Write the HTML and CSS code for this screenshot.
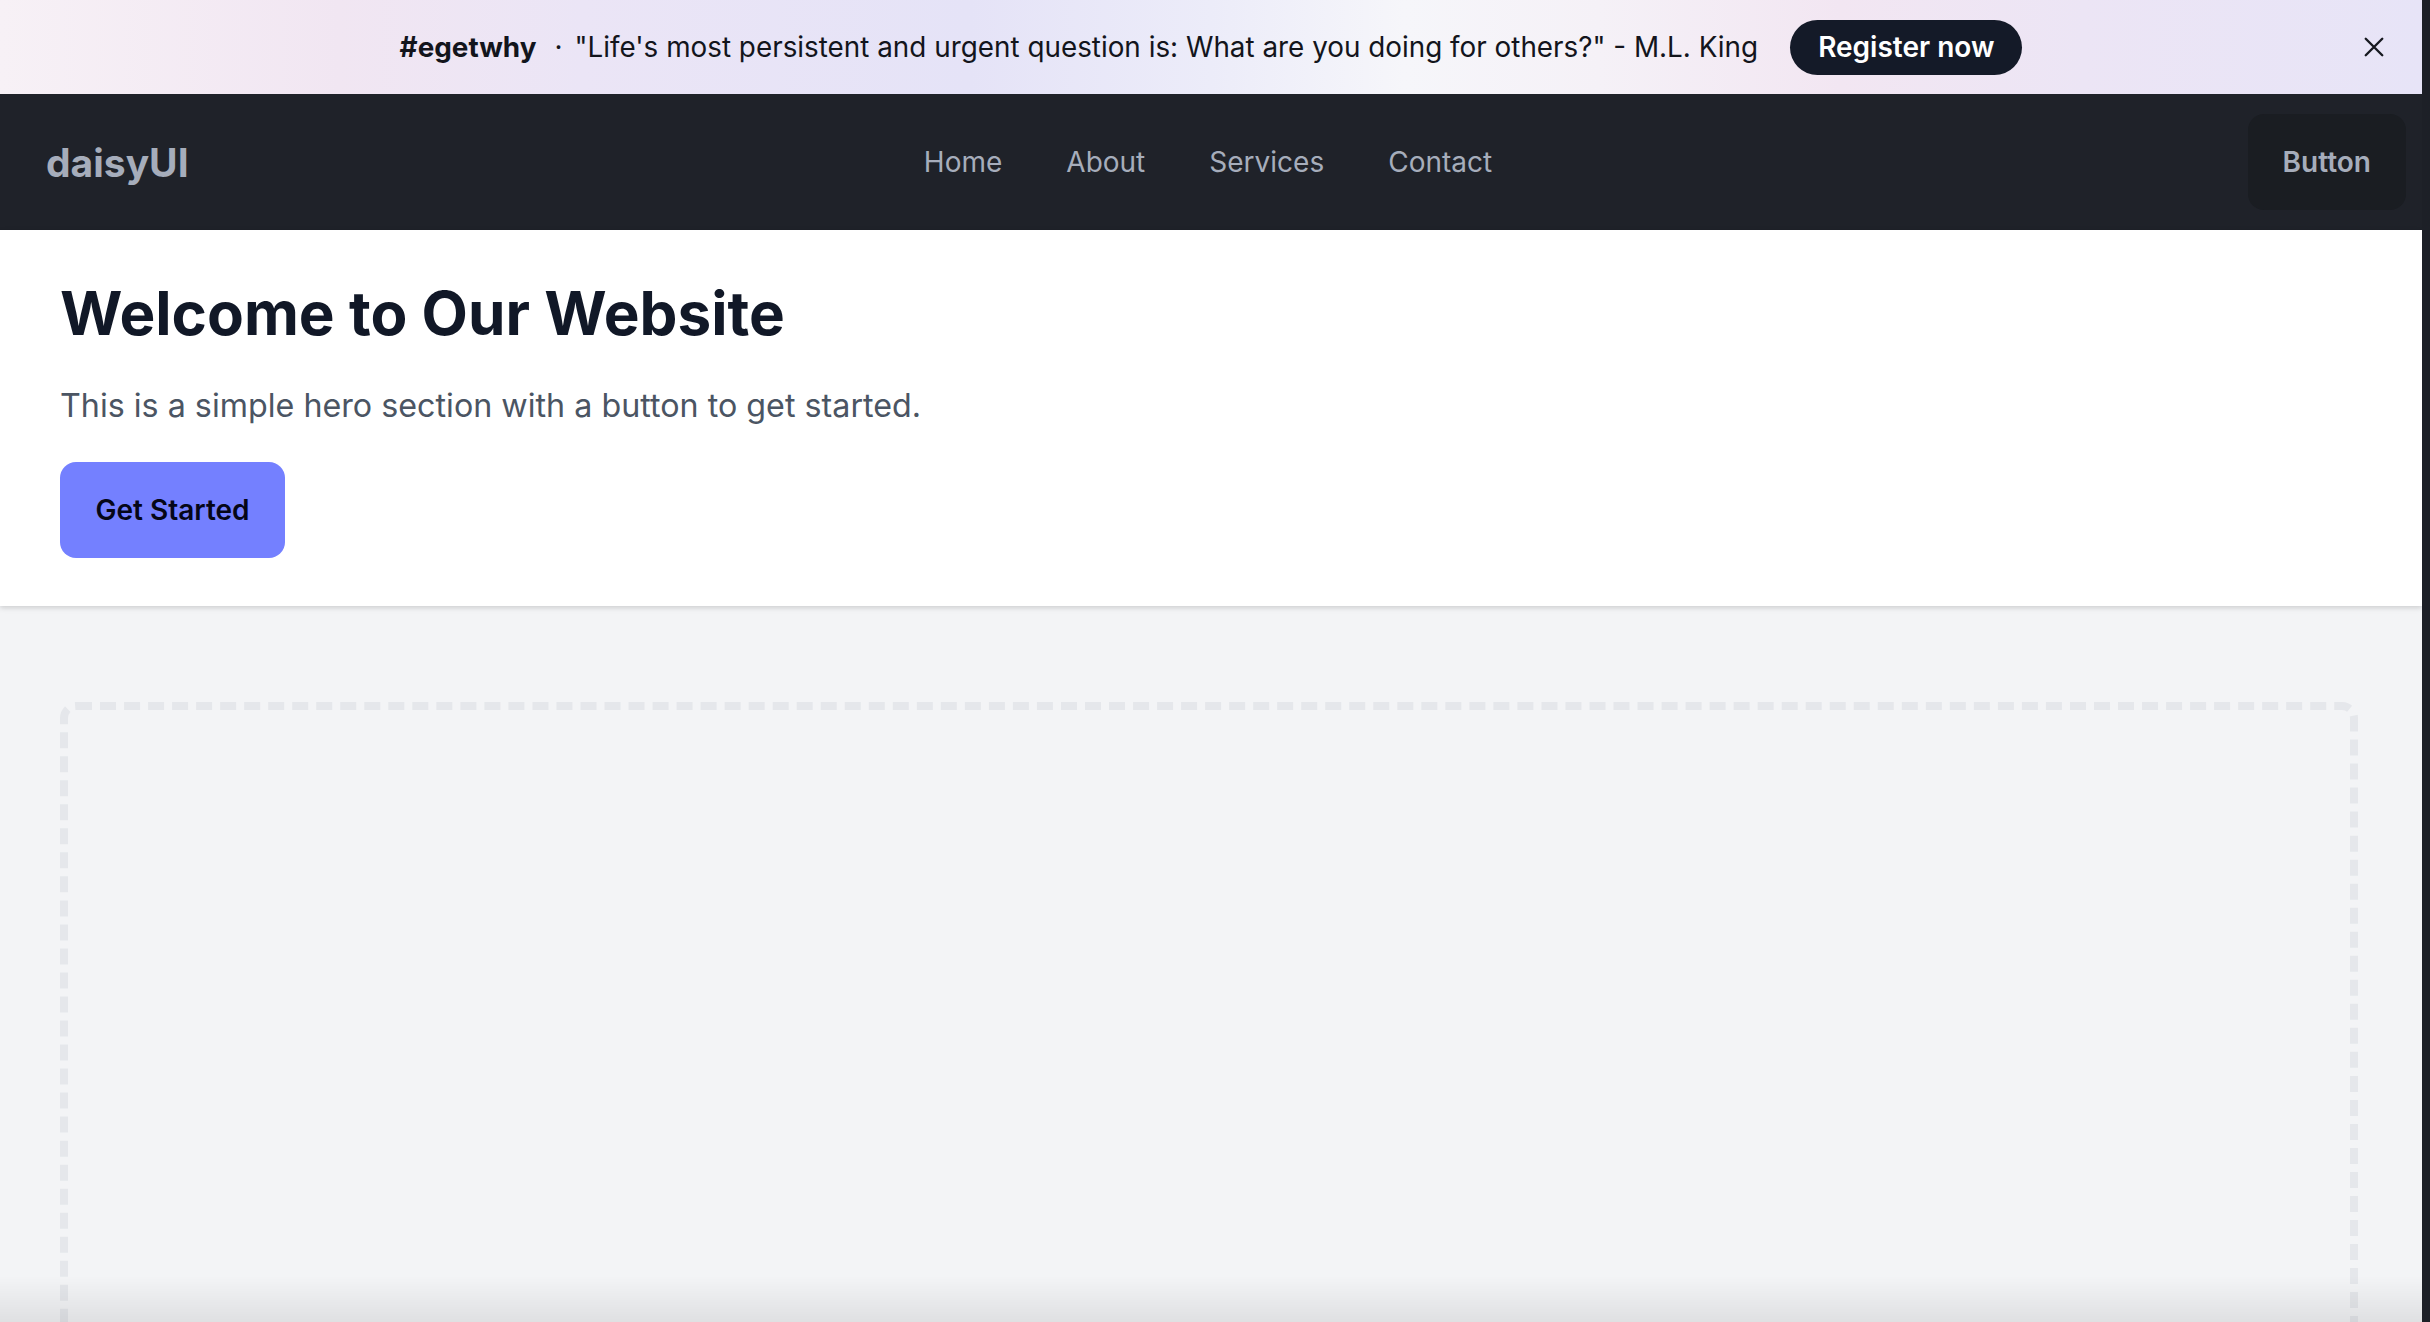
FILE: index.html
```html
<!DOCTYPE html>
<html lang="en">
<head>
<meta charset="utf-8">
<title>daisyUI</title>
<link rel="stylesheet" href="styles.css">
</head>
<body>
<div class="announce">
  <div class="announce-side"></div>
  <div class="announce-content">
    <span class="tag">#egetwhy</span>
    <span class="dot">·</span>
    <span class="quote">"Life's most persistent and urgent question is: What are you doing for others?" - M.L. King</span>
    <a class="register">Register now</a>
  </div>
  <div class="announce-side announce-end">
    <button class="close" aria-label="Close">
      <svg viewBox="0 0 24 24" width="22" height="22"><path d="M3 3 L21 21 M21 3 L3 21" stroke="#16181f" stroke-width="2.6" stroke-linecap="round" fill="none"/></svg>
    </button>
  </div>
</div>
<nav class="navbar">
  <div class="nav-start"><a class="logo">daisyUI</a></div>
  <ul class="menu">
    <li>Home</li>
    <li>About</li>
    <li>Services</li>
    <li>Contact</li>
  </ul>
  <div class="nav-end"><button class="nav-btn">Button</button></div>
</nav>
<header class="hero">
  <h1>Welcome to Our Website</h1>
  <p>This is a simple hero section with a button to get started.</p>
  <button class="cta">Get Started</button>
</header>
<main class="main">
  <div class="dropzone"></div>
</main>
</body>
</html>
```
FILE: styles.css
```css
html {
  background: #1d2027;
}
body {
  margin: 0 8px 0 0;
  height: 1322px;
  overflow: hidden;
  display: flex;
  flex-direction: column;
  background: #f3f4f6;
  font-family: Inter, "Noto Sans", sans-serif;
}
body::after {
  content: "";
  position: fixed;
  left: 0;
  right: 8px;
  bottom: 0;
  height: 46px;
  background: linear-gradient(to bottom, rgba(0, 0, 0, 0), rgba(0, 0, 0, 0.08));
  pointer-events: none;
}

/* announcement bar */
.announce {
  flex: none;
  height: 94px;
  display: grid;
  grid-template-columns: 1fr auto 1fr;
  align-items: center;
  background:
    linear-gradient(90deg, #f7f1f6 0%, #f1e6f2 14%, #ebe5f6 24%, #e5e3f7 40%, #ececf9 50%, #f6f6fa 58%, #f5f1f7 66%, #f2e6f2 76%, #ece5f5 86%, #e7e4f7 100%);
  color: #13151c;
  font-size: 27.85px;
}
.announce-content {
  display: flex;
  align-items: center;
  white-space: nowrap;
}
.tag {
  font-weight: 700;
}
.dot {
  margin: 0 12px 0 18px;
}
.register {
  margin-left: 32px;
  height: 55px;
  padding: 0 28px;
  display: flex;
  align-items: center;
  border-radius: 999px;
  background: #141a28;
  color: #ffffff;
  font-size: 28px;
  font-weight: 600;
}
.announce-end {
  display: flex;
  justify-content: flex-end;
  padding-right: 37px;
}
.close {
  border: none;
  background: none;
  padding: 0;
  display: flex;
}

/* navbar */
.navbar {
  flex: none;
  height: 136px;
  box-sizing: border-box;
  padding: 0 16px;
  display: flex;
  align-items: center;
  background: #1f2229;
  color: #a6adbb;
}
.nav-start {
  flex: 1;
  display: flex;
}
.nav-end {
  flex: 1;
  display: flex;
  justify-content: flex-end;
}
.logo {
  height: 96px;
  padding: 0 30px;
  display: flex;
  align-items: center;
  font-size: 39px;
  font-weight: 700;
}
.menu {
  display: flex;
  list-style: none;
  margin: 0;
  padding: 0 19px 0 13px;
}
.menu li {
  padding: 0 32px;
  font-size: 28px;
  line-height: 40px;
}
.nav-btn {
  height: 96px;
  padding: 0 35px;
  border: none;
  border-radius: 16px;
  background: #1a1d22;
  color: #a6adbb;
  font-family: Inter, sans-serif;
  font-size: 28px;
  font-weight: 600;
}

/* hero */
.hero {
  flex: none;
  position: relative;
  z-index: 1;
  background: #ffffff;
  padding: 48px 60px 48px;
  box-shadow: 0 2px 6px rgba(0, 0, 0, 0.1), 0 2px 4px rgba(0, 0, 0, 0.06);
}
.hero h1 {
  margin: 0 0 32px;
  font-size: 60.2px;
  line-height: 72px;
  font-weight: 700;
  color: #111827;
}
.hero p {
  margin: 0 0 32px;
  font-size: 32.25px;
  line-height: 48px;
  color: #4b5563;
}
.cta {
  height: 96px;
  padding: 0 35.5px;
  border: none;
  border-radius: 16px;
  background: #7480ff;
  color: #050617;
  font-family: Inter, sans-serif;
  font-size: 28px;
  font-weight: 600;
}

/* main */
.main {
  flex: 1;
  min-height: 0;
  padding: 96px 64px 0 60px;
  overflow: hidden;
}
.dropzone {
  height: 768px;
  box-sizing: border-box;
  border: 8px dashed #e5e7eb;
  border-radius: 16px;
}
```
